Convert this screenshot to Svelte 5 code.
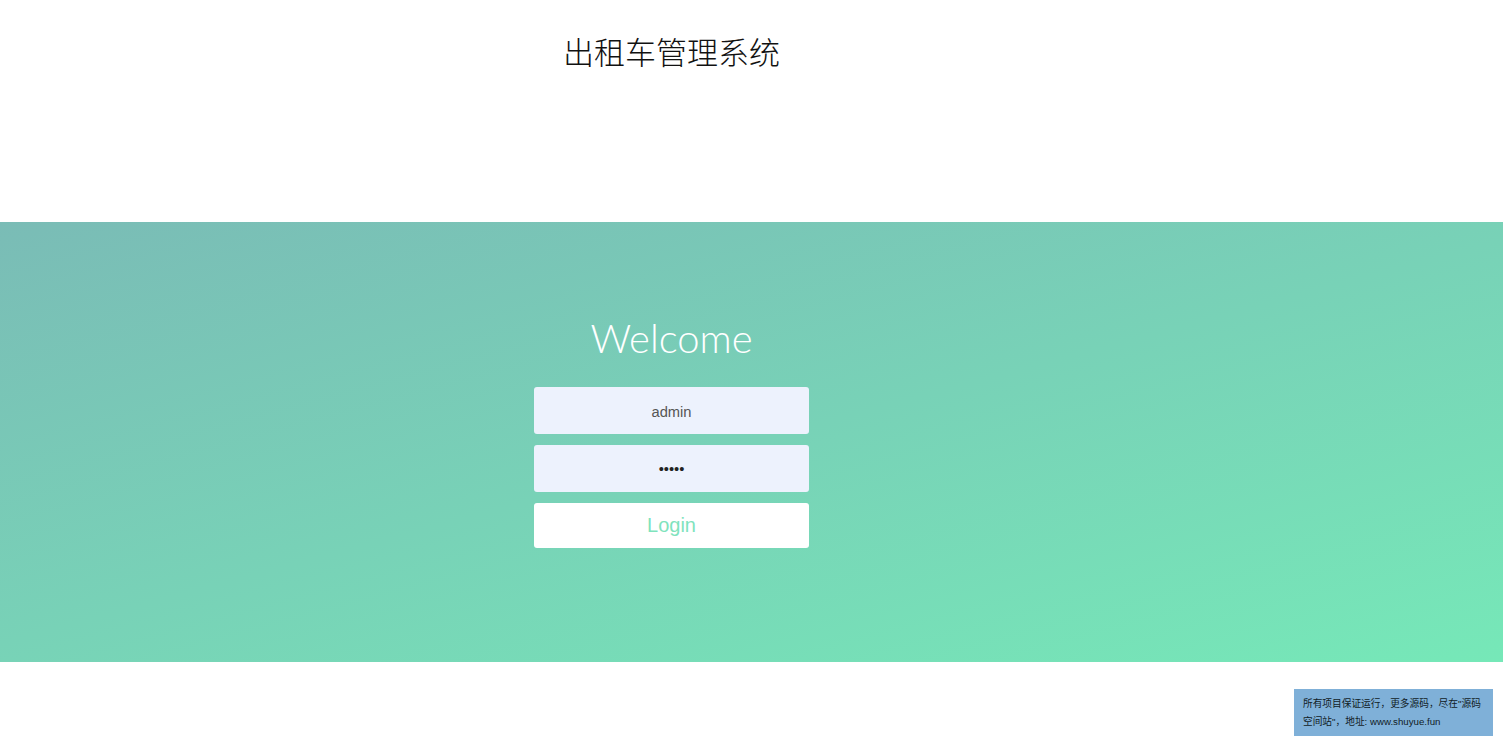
<script lang="ts">
  let username = $state("admin");
  let password = $state("12345");
</script>

<div class="page">
  <header class="title-bar">
    <h1>出租车管理系统</h1>
  </header>

  <section class="wrapper">
    <div class="container">
      <h2>Welcome</h2>
      <form class="form" onsubmit={(e) => e.preventDefault()}>
        <input type="text" bind:value={username} placeholder="Username" />
        <input type="password" bind:value={password} placeholder="Password" />
        <button type="submit">Login</button>
      </form>
    </div>
  </section>

  <aside class="notice">
    所有项目保证运行，更多源码，尽在"源码空间站"，地址: www.shuyue.fun
  </aside>
</div>

<style>
  :global(body) {
    margin: 0;
    background: #fff;
    overflow: hidden;
  }

  .page {
    height: 736px;
    overflow: hidden;
    position: relative;
    font-family: "Liberation Sans", "Noto Sans CJK SC", sans-serif;
  }

  .title-bar {
    width: 1343px;
    height: 222px;
    padding-top: 29px;
    box-sizing: border-box;
    text-align: center;
  }

  h1 {
    margin: 0;
    font-family: "Noto Sans CJK SC", sans-serif;
    font-size: 31px;
    font-weight: 200;
    line-height: 44px;
    color: #111;
  }

  .wrapper {
    height: 440px;
    background: linear-gradient(165deg, #7abcb6 0%, #76e8b8 100%);
  }

  .container {
    width: 1343px;
    padding-top: 91px;
    display: flex;
    flex-direction: column;
    align-items: center;
  }

  h2 {
    margin: 0 0 24px;
    font-family: Lato, sans-serif;
    font-size: 40px;
    font-weight: 300;
    line-height: 50px;
    color: #fff;
  }

  .form {
    display: flex;
    flex-direction: column;
    gap: 11px;
    width: 275px;
  }

  input {
    box-sizing: border-box;
    width: 100%;
    height: 47px;
    padding: 2px 0 0;
    border: 0;
    border-radius: 3px;
    background: #edf2fd;
    color: #555;
    font-family: inherit;
    font-size: 14.7px;
    text-align: center;
    outline: none;
  }

  input[type="password"] {
    padding-top: 0;
    color: #222;
  }

  button {
    height: 45px;
    border: 0;
    border-radius: 3px;
    background: #fff;
    color: #7fe3bd;
    font-family: inherit;
    font-size: 20px;
    cursor: pointer;
  }

  .notice {
    position: absolute;
    right: 10px;
    top: 689px;
    width: 199px;
    height: 60px;
    box-sizing: border-box;
    padding: 6px 9px;
    background: #7fb0d8;
    color: #111c26;
    font-size: 9.7px;
    line-height: 18px;
  }
</style>
